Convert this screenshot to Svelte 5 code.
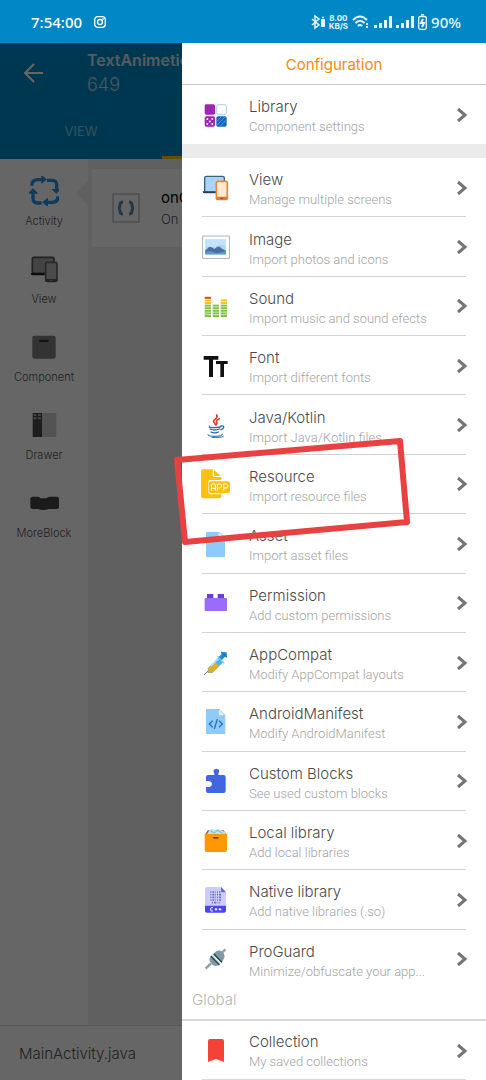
<script>
  const rail = ['Activity', 'View', 'Component', 'Drawer', 'MoreBlock'];

  const items = [
    { id: 'view', title: 'View', sub: 'Manage multiple screens', box: '33 39 90 90' },
    { id: 'image', title: 'Image', sub: 'Import photos and icons', box: '33 217 90 90' },
    { id: 'sound', title: 'Sound', sub: 'Import music and sound efects', box: '33 396 90 90' },
    { id: 'font', title: 'Font', sub: 'Import different fonts', box: '33 33 90 90' },
    { id: 'java', title: 'Java/Kotlin', sub: 'Import Java/Kotlin files', box: '33 211 90 90' },
    { id: 'resource', title: 'Resource', sub: 'Import resource files', box: '33 390 90 90', marked: true },
    { id: 'asset', title: 'Asset', sub: 'Import asset files', box: '33 27 90 90' },
    { id: 'permission', title: 'Permission', sub: 'Add custom permissions', box: '33 207 90 90' },
    { id: 'compat', title: 'AppCompat', sub: 'Modify AppCompat layouts', box: '33 384 90 90' },
    { id: 'manifest', title: 'AndroidManifest', sub: 'Modify AndroidManifest', box: '33 54 90 90' },
    { id: 'blocks', title: 'Custom Blocks', sub: 'See used custom blocks', box: '33 231 90 90' },
    { id: 'local', title: 'Local library', sub: 'Add local libraries', box: '33 408 90 90' },
    { id: 'native', title: 'Native library', sub: 'Add native libraries (.so)', box: '33 48 90 90' },
    { id: 'proguard', title: 'ProGuard', sub: 'Minimize/obfuscate your app...', box: '33 225 90 90' }
  ];
  const library = { id: 'library', title: 'Library', sub: 'Component settings', box: '603 297 90 90' };
  const collection = { id: 'collection', title: 'Collection', sub: 'My saved collections', box: '33 495 90 90' };

  const railBox = {
    Activity: '85 48 90 90',
    View: '85 282 90 90',
    Component: '85 37 90 90',
    Drawer: '85 273 90 90',
    MoreBlock: '85 507 90 90'
  };

  // Equaliser columns: left edge and number of lit bars
  const columns = [[44, 8], [68, 5], [92, 7]];
  const barColor = (n) => (n > 6 ? '#d9483b' : n > 4 ? '#f2c230' : '#84c341');
</script>

{#snippet icon(id)}
  {#if id === 'library'}
    <rect x="614" y="310" width="31" height="31" rx="5" fill="#9c27b0" />
    <rect x="650" y="311" width="29" height="29" rx="5" fill="#fff" stroke="#a5d2f5" stroke-width="3" />
    <rect x="614" y="346" width="31" height="31" rx="5" fill="#9c27b0" />
    <g fill="#fff"><circle cx="622" cy="354" r="3" /><circle cx="637" cy="354" r="3" /><circle cx="629.500" cy="361.500" r="3" /><circle cx="622" cy="369" r="3" /><circle cx="637" cy="369" r="3" /></g>
    <rect x="649" y="346" width="31" height="31" rx="5" fill="#1565c0" />
    <path d="M651 361l12-13M651 372l24-24M661 375l17-17" stroke="#64b5f6" stroke-width="2" />
  {:else if id === 'view'}
    <rect x="44" y="49" width="59" height="48" rx="5" fill="#a9d3fb" stroke="#3b5f7d" stroke-width="4" />
    <path d="M38 94h40v6H43q-5 0-5-6z" fill="#253f5c" />
    <rect x="79" y="64" width="33" height="54" rx="5" fill="#fde9cf" stroke="#e8883a" stroke-width="5" />
    <path d="M79 110h33v6q0 3-4 3H83q-4 0-4-3z" fill="#e07b28" /><path d="M91 115h9" stroke="#8c4715" stroke-width="3" />
  {:else if id === 'image'}
    <rect x="38" y="229" width="80" height="67" fill="#fff" stroke="#9aa7b5" stroke-width="2.500" />
    <rect x="46" y="239" width="62" height="45" fill="#aed8fa" />
    <path d="M46 239h62v20q-14-10-30 2-14 3-32-1z" fill="#c2e3fd" />
    <path d="M46 271q7-3 10-8l5-2 7 3 5 4 9-7 7 0 7 6 12 6v11H46z" fill="#4c6e9d" />
    <path d="M46 276q15-3 25 2t37-4v10H46z" fill="#5f99d4" />
  {:else if id === 'sound'}
    {#each columns as [x, count]}
      {#each Array(count) as _, n}
        <rect {x} y={468 - n * 7.8} width="19" height="6" fill={barColor(n)} />
      {/each}
    {/each}
  {:else if id === 'font'}
    <path d="M41 48h44v11H69v52H57V59H41zM78 63h35v9H102v39H91V72H78z" fill="#111" />
  {:else if id === 'java'}
    <path d="M80 226q4 6-5 13-8 6-1 11l3 6M88 237q-11 5-8 10 3 4-2 9" fill="none" stroke="#e23b32" stroke-width="5" stroke-linecap="round" />
    <g fill="none" stroke="#2769ae" stroke-width="4" stroke-linecap="round">
      <path d="M58 260q-2 4 17 4 15-1 18-3M60 268q14 6 29 0M63 277q11 5 22 0M93 259q9-2 8 4-1 5-8 7" />
      <path d="M54 284q-5 5 18 6 26 0 26-7M66 293q25 2 34-3" stroke-width="3" />
    </g>
  {:else if id === 'resource'}
    <path d="M39 391h29v18q0 5 5 5h21v9H61q-6 0-6 6v31q0 6 6 6h33v6q0 6-6 6H39q-6 0-6-6v-75q0-6 6-6z" fill="#fdc10d" />
    <path d="M72 393l21 18H76q-4 0-4-4z" fill="#fdc10d" />
    <rect x="57" y="427" width="63" height="35" rx="6" fill="#fdc10d" />
    <g fill="none" stroke="#fff" stroke-width="3"><path d="M64 455v-14q0-7 6-7t6 7v14M64 448h12M82 455v-20h7q6 0 6 6t-6 6h-7M101 455v-20h7q6 0 6 6t-6 6h-7" /></g>
  {:else if id === 'asset'}
    <path d="M48 36h40l17 17v58H48z" fill="#90caf9" /><path d="M86 37l18 18H86z" fill="#dff0fe" />
  {:else if id === 'permission'}
    <path d="M51 237v-12h19v12M83 237v-12h19v12" fill="#6d3fc9" />
    <rect x="44" y="237" width="67" height="39" rx="2" fill="#9b6cfb" />
  {:else if id === 'compat'}
    <path d="M42 465l16-16" stroke="#607986" stroke-width="3" />
    <path d="M54 445l32-33 14 14-32 32-15 1z" fill="#4cb1ec" />
    <path d="M55 444l19-19 14 14-19 18-14 2z" fill="#d9b12c" />
    <path d="M63 438l22-22" stroke="#b5e4fa" stroke-width="4" />
    <path d="M82 408l20 21" stroke="#86cff4" stroke-width="4" />
    <path d="M86 411l9-9-2-6 17 1 1 15-6-2-9 10z" fill="#188ed1" /><path d="M94 396l17 16" stroke="#0f65a6" stroke-width="3" />
  {:else if id === 'manifest'}
    <path d="M48 60h40l18 18v57H48z" fill="#90caf9" /><path d="M87 62l17 17H87z" fill="#e1f2ff" />
    <path d="M68 95l-10 10 10 10M87 95l10 10-10 10M82 90l-9 30" fill="none" stroke="#2575bd" stroke-width="4" />
  {:else if id === 'blocks'}
    <path d="M54 258h18q3-2 0-6-5-12 7-13 12 1 7 13-3 4 0 6h15q6 0 6 6v42q0 6-6 6H54q-6 0-6-6v-12q17 2 18-9-1-11-18-9v-12q0-6 6-6z" fill="#4166df" />
  {:else if id === 'local'}
    <path d="M45 434l8-13h48l9 13z" fill="#a95f27" />
    <path d="M50 434l8-13 10-4 7 4 9-5 9 5 11 4 4 9z" fill="#b9e5f5" /><path d="M61 422l12 7 10-8 14 9" stroke="#6fb9cf" stroke-width="3" fill="none" />
    <path d="M44 432h67v48q0 6-6 6H50q-6 0-6-6z" fill="#ff9800" /><rect x="69" y="441" width="17" height="5" rx="2" fill="#7e3c0c" />
  {:else if id === 'native'}
    <path d="M51 54h43l14 15v43H45V60q0-6 6-6z" fill="#cdcdfc" /><path d="M93 54l15 16H97q-4 0-4-4z" fill="#6669e5" />
    <path d="M45 110h63v15q0 6-6 6H51q-6 0-6-6z" fill="#4747ed" />
    <path d="M61 69h30M61 77h33M61 85h33M61 93h32M66 101h25" stroke="#6f70c9" stroke-width="5" stroke-dasharray="3 3 6 2 2 4" />
    <path d="M69 116h-4q-3 0-3 3v4q0 3 3 3h4M74 121h8M78 117v8M86 121h8M90 117v8" fill="none" stroke="#fff" stroke-width="3" />
  {:else if id === 'proguard'}
    <path d="M47 299l16-16M92 255l14-14" stroke="#8aa0ab" stroke-width="7" />
    <path d="M62 262q-8 10 1 20 8 14 22 7l7-5-24-27z" fill="#8299a5" />
    <path d="M71 254q12-15 26-6 12 11 2 26l-5 8-25-25z" fill="#8299a5" />
    <path d="M63 262l25 26M71 254l25 26" stroke="#244f50" stroke-width="4" /><path d="M67 258l25 26" stroke="#e4ecee" stroke-width="4" />
  {:else if id === 'collection'}
    <path d="M60 504h36q6 0 6 6v63l-24-9-24 9v-63q0-6 6-6z" fill="#f44336" />
  {/if}
{/snippet}

{#snippet railIcon(name)}
  {#if name === 'Activity'}
    <g fill="none" stroke="#2c95e8" stroke-width="10">
      <path d="M93 77q0-18 20-18h12M139 61h17q12 0 12 15v14M172 109q0 18-18 18h-15M123 129h-12q-14 0-14-15v-14" />
    </g>
    <path d="M122 45l17 13-17 14zM152 87h30l-15 14zM142 113v28l-18-14zM82 101l15-17 16 17z" fill="#2c95e8" />
  {:else if name === 'View'}
    <rect x="95" y="292" width="65" height="48" rx="4" fill="#aaa" stroke="#555" stroke-width="5" />
    <path d="M90 339h42v7H96q-6 0-6-7z" fill="#222" />
    <rect x="135" y="307" width="34" height="57" rx="5" fill="#bbb" stroke="#666" stroke-width="5" />
    <path d="M135 357h34v5q0 3-4 3h-26q-4 0-4-3z" fill="#555" /><path d="M148 361h8" stroke="#bbb" stroke-width="2" />
  {:else if name === 'Component'}
    <rect x="95" y="48" width="70" height="69" rx="6" fill="#808080" /><rect x="115" y="60" width="29" height="7" rx="3" fill="#333" />
  {:else if name === 'Drawer'}
    <rect x="96" y="282" width="28" height="72" fill="#4a4a4a" /><rect x="124" y="282" width="43" height="72" fill="#d0d0d0" />
    <path d="M99 288h8m5 0h8M98 298h10m4 0h9" stroke="#aaa" stroke-width="6" />
  {:else}
    <path d="M97 533h15q6 0 7 5h20q1-5 7-5h23q6 0 6 6v25q0 6-6 6h-24q-6 3-18 3-10 0-14-3H96q-7 0-7-6v-25q0-6 8-6z" fill="#454545" />
  {/if}
{/snippet}

{#snippet row(item)}
  <button class="row">
    <svg class="icon" viewBox={item.box} aria-hidden="true">{@render icon(item.id)}</svg>
    <span class="copy">
      <span class="title">{item.title}</span>
      <span class="sub">{item.sub}</span>
    </span>
    <svg class="chevron" viewBox="0 0 12 16" aria-hidden="true"><path d="M2 2l7 6-7 6" fill="none" stroke="#757575" stroke-width="3" /></svg>
  </button>
{/snippet}

<div class="screen">
  <header class="status">
    <span class="clock">7:54:00</span>
    <svg class="insta" viewBox="0 0 12 12" fill="none" stroke="#fff" aria-hidden="true"><rect x=".7" y=".7" width="10.600" height="10.600" rx="3" stroke-width="1.300" /><circle cx="6" cy="6" r="2.500" stroke-width="1.300" /><circle cx="9" cy="3" r=".5" /></svg>
    <span class="fill"></span>
    <svg width="14" height="16" viewBox="0 0 14 16" fill="none" stroke="#e8f6ff" stroke-width="1.500" aria-hidden="true"><path d="M1 5l7 6-4 3V2l4 3-7 6" /><rect x="10" y="5" width="4" height="8" fill="#e8f6ff" stroke="none" /><path d="M11 3.500h2" /></svg>
    <span class="speed"><b>8.00</b><b>KB/S</b></span>
    <svg width="18" height="16" viewBox="0 0 18 16" fill="none" stroke="#e8f6ff" stroke-width="2" aria-hidden="true"><path d="M1 6q7-7 14 0M3.500 9q4.500-4.500 9 0M6 12q2-2 4 0" /><path d="M15 9v2M15 12v2" stroke-width="1.800" /></svg>
    {#each [0, 1] as n (n)}
      <svg width="18" height="14" viewBox="0 0 18 14" fill="#e8f6ff" aria-hidden="true"><path d="M0 10h3v3H0zM5 8h3v5H5zM10 5h3v8h-3zM15 1h3v12h-3z" /></svg>
    {/each}
    <svg width="9" height="16" viewBox="0 0 9 16" fill="none" stroke="#e8f6ff" aria-hidden="true"><rect x=".7" y="2.500" width="7.600" height="12.800" rx="1.500" stroke-width="1.300" /><path d="M3 .8h3" stroke-width="1.500" /><path d="M5 5l-2 4h3l-2 4" stroke-width="2" /></svg>
    <span class="battery">90%</span>
  </header>

  <div class="stage">
    <div class="page">
      <div class="appbar">
        <div class="heading">
          <button class="back" aria-label="Back"><svg width="22" height="22" viewBox="0 0 22 22" fill="none" stroke="#fff" stroke-width="2"><path d="M20 11H2M11 2l-9 9 9 9" /></svg></button>
          <div class="project"><strong>TextAnimetic</strong><span>649</span></div>
        </div>
        <nav class="tabs"><button>VIEW</button><span class="active"></span></nav>
      </div>
      <div class="workspace">
        <nav class="rail">
          {#each rail as name (name)}
            <button class:chosen={name === 'Activity'}>
              <svg class="icon" viewBox={railBox[name]} aria-hidden="true">{@render railIcon(name)}</svg>
              <span>{name}</span>
            </button>
          {/each}
        </nav>
        <main>
          <article class="card">
            <svg width="28" height="30" viewBox="0 0 28 30" fill="none" aria-hidden="true"><rect x="1" y="1" width="26" height="28" stroke="#99a3ac" /><path d="M11 9q-3 0-3 3 0 3-2 3 2 0 2 3 0 3 3 3M17 9q3 0 3 3 0 3 2 3-2 0-2 3 0 3-3 3" stroke="#5b8db8" stroke-width="3" /></svg>
            <div><b>onC</b><span>On a</span></div>
          </article>
        </main>
      </div>
      <footer>MainActivity.java</footer>
    </div>
    <div class="scrim"></div>

    <aside class="drawer">
      <h1>Configuration</h1>
      <div class="single">{@render row(library)}</div>
      <div class="band"></div>
      <ul>
        {#each items as item (item.id)}
          <li>
            {@render row(item)}
            {#if item.marked}
              <svg class="marker" viewBox="0 0 240 112" aria-hidden="true"><path d="M5 24L228 5l7 81-222 20z" fill="none" stroke="#e84141" stroke-width="6" stroke-linejoin="round" /></svg>
            {/if}
          </li>
        {/each}
      </ul>
      <h2>Global</h2>
      <div class="single ruled">{@render row(collection)}</div>
    </aside>
  </div>
</div>

<style>
  :global(body) { background: #fff; }
  * { box-sizing: border-box; }
  .screen { display: flex; flex-direction: column; height: 100vh; min-height: 1000px; overflow: hidden; font-family: Inter, Roboto, sans-serif; font-weight: 300; }
  button { border: 0; padding: 0; background: none; font: inherit; color: inherit; text-align: left; }
  svg { flex: none; display: block; }
  .icon { width: 30px; height: 30px; }

  .status { display: flex; align-items: center; gap: 4px; flex: none; height: 43px; padding: 0 25px 0 31px; background: #0187c5; color: #fff; }
  .clock { font: 500 15px/20px "Noto Sans", sans-serif; margin-right: 8px; }
  .insta { width: 12px; height: 12px; }
  .fill { flex: 1; }
  .speed { display: flex; flex-direction: column; text-align: center; font-size: 8px; line-height: 8px; font-weight: 700; color: #e8f6ff; }
  .speed b { font-weight: 700; }
  .battery { font: 500 15px/20px "Noto Sans", sans-serif; color: #e8f6ff; }

  .stage { position: relative; flex: 1; min-height: 0; display: flex; }
  .page { flex: 1; min-width: 0; display: flex; flex-direction: column; background: #f1f1f1; overflow: hidden; }
  .scrim { position: absolute; inset: 0; background: rgba(0, 0, 0, 0.6); }

  .appbar { display: flex; flex-direction: column; flex: none; height: 116px; background: #008ac9; color: #fff; }
  .heading { display: flex; flex: none; height: 59px; }
  .back { width: 87px; padding-left: 23px; }
  .project { display: flex; flex-direction: column; padding-top: 6px; }
  .project strong { font-size: 16px; line-height: 22px; font-weight: 600; opacity: 0.8; }
  .project span { font-size: 18px; line-height: 28px; opacity: 0.7; }
  .tabs { flex: 1; display: grid; grid-template-columns: repeat(3, 1fr); }
  .tabs button { text-align: center; font-size: 13px; font-weight: 400; color: #8cc7e3; }
  .tabs .active { border-bottom: 3px solid #ffc107; }

  .workspace { flex: 1; min-height: 0; display: flex; }
  .rail { display: flex; flex-direction: column; width: 88px; background: #fff; }
  .rail button { position: relative; display: flex; flex-direction: column; align-items: center; gap: 6px; height: 78px; padding-top: 17px; font-size: 11px; line-height: 18px; color: #555; }
  .chosen::after { content: ""; position: absolute; right: 0; top: 22px; border: 12px solid transparent; border-left: 0; border-right-color: #f1f1f1; }
  main { flex: 1; min-width: 0; padding: 10px 4px; }
  .card { display: flex; align-items: center; gap: 21px; height: 78px; padding-left: 20px; background: #fff; border-radius: 2px; white-space: nowrap; }
  .card div { display: flex; flex-direction: column; }
  .card b { font-size: 15px; line-height: 22px; font-weight: 400; color: #000; }
  .card span { font-size: 13px; line-height: 20px; color: #555; }
  footer { flex: none; height: 55px; padding: 0 19px; border-top: 1px solid #ddd; background: #fff; color: #555; font-size: 15px; line-height: 56px; }

  .drawer { position: absolute; inset: 0 0 0 182px; display: flex; flex-direction: column; background: #fff; }
  h1 { flex: none; height: 42px; margin: 0; border-bottom: 1px solid #c9c9c9; color: #ef8b12; text-align: center; font-size: 15px; line-height: 43px; font-weight: 400; }
  .single { flex: none; height: 59px; padding: 0 20px; }
  .single .row { border: 0; }
  .ruled .row { border-bottom: 1px solid #d9d9d9; }
  .band { flex: none; height: 14px; background: #ebebeb; }
  ul { flex: 1; display: flex; flex-direction: column; margin: 0; padding: 0 20px; list-style: none; }
  li { position: relative; flex: 1; display: flex; border-bottom: 1px solid #d2d2d2; }
  li:last-child { border-bottom-color: transparent; }
  .row { display: flex; align-items: center; width: 100%; height: 100%; padding-top: 1px; }
  .row .icon { margin-left: -1px; }
  .copy { flex: 1; min-width: 0; display: flex; flex-direction: column; margin-left: 18px; padding-top: 2px; white-space: nowrap; }
  li .copy { padding-top: 4px; }
  .title { font-size: 15px; line-height: 20px; color: #4a4a4a; }
  .sub { font-family: Roboto, sans-serif; font-size: 13px; line-height: 19px; color: #a3a3a3; }
  .chevron { width: 12px; height: 16px; margin-right: -2px; }
  .marker { position: absolute; z-index: 1; left: -30px; top: -19px; width: 240px; height: 112px; pointer-events: none; }
  h2 { flex: none; height: 32px; margin: 0; padding-left: 10px; border-bottom: 2px solid #d9d9d9; color: #b5b5b5; font-size: 15px; line-height: 22px; font-weight: 300; }
</style>
